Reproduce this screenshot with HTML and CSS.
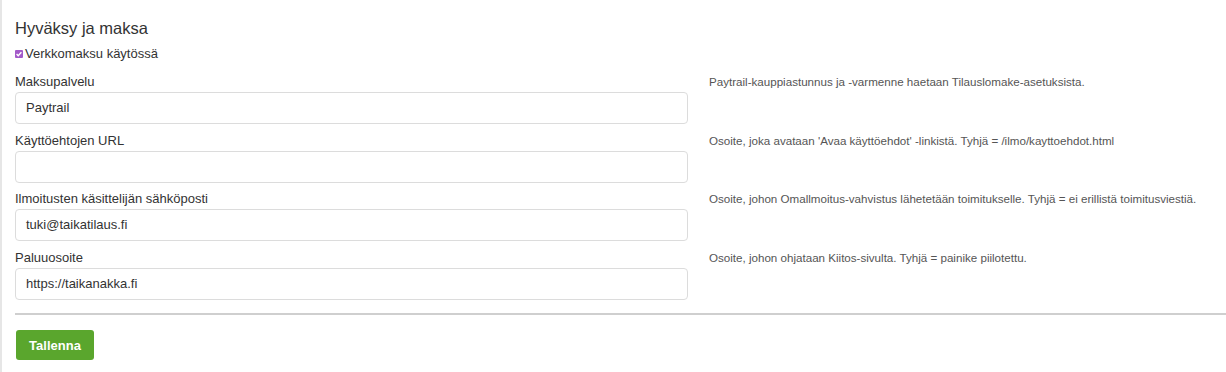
FILE: index.html
```html
<!DOCTYPE html>
<html lang="fi">
<head>
    <meta charset="UTF-8">
    <title>Hyväksy ja maksa</title>
    <link rel="stylesheet" href="styles.css">
</head>
<body>
    <div class="panel">
        <h3 class="panel-title">Hyväksy ja maksa</h3>
        <label class="check-row">
            <span class="check-box">
                <svg width="8" height="8" viewBox="0 0 8 8"><path d="M1.6 4.1 L3.2 5.7 L6.4 2.3" fill="none" stroke="#fff" stroke-width="1.4"/></svg>
            </span>Verkkomaksu käytössä
        </label>
        <div class="form-rows">
            <div class="form-row">
                <div class="field">
                    <div class="field-label">Maksupalvelu</div>
                    <div class="field-input">Paytrail</div>
                </div>
                <div class="field-help">Paytrail-kauppiastunnus ja -varmenne haetaan Tilauslomake-asetuksista.</div>
            </div>
            <div class="form-row">
                <div class="field">
                    <div class="field-label">Käyttöehtojen URL</div>
                    <div class="field-input"></div>
                </div>
                <div class="field-help">Osoite, joka avataan 'Avaa käyttöehdot' -linkistä. Tyhjä = /ilmo/kayttoehdot.html</div>
            </div>
            <div class="form-row">
                <div class="field">
                    <div class="field-label">Ilmoitusten käsittelijän sähköposti</div>
                    <div class="field-input">tuki@taikatilaus.fi</div>
                </div>
                <div class="field-help">Osoite, johon Omallmoitus-vahvistus lähetetään toimitukselle. Tyhjä = ei erillistä toimitusviestiä.</div>
            </div>
            <div class="form-row">
                <div class="field">
                    <div class="field-label">Paluuosoite</div>
                    <div class="field-input">https://taikanakka.fi</div>
                </div>
                <div class="field-help">Osoite, johon ohjataan Kiitos-sivulta. Tyhjä = painike piilotettu.</div>
            </div>
        </div>
        <hr class="divider">
        <button class="save-button">Tallenna</button>
    </div>
</body>
</html>
```

FILE: styles.css
```css
body {
    margin: 0;
    font-family: 'Liberation Sans', Arial, sans-serif;
    color: #333;
    background-color: #fff;
}
.panel {
    border-left: 2px solid #e6e6e6;
    padding: 0 0 12px 13px;
    min-height: 360px;
}
.panel-title {
    margin: 0;
    padding-top: 18px;
    font-size: 16.5px;
    font-weight: normal;
    line-height: 20px;
}
.check-row {
    display: flex;
    align-items: center;
    margin-top: 8px;
    font-size: 13px;
    line-height: 16px;
}
.check-box {
    display: inline-flex;
    width: 8px;
    height: 8px;
    margin-right: 2px;
    border-radius: 1px;
    background-color: #a35ac9;
}
.form-rows {
    margin-top: 10px;
}
.form-row {
    display: grid;
    grid-template-columns: 673px 1fr;
    gap: 21px;
    margin-bottom: 6.7px;
}
.field-label {
    font-size: 13px;
    line-height: 20px;
}
.field-input {
    box-sizing: border-box;
    height: 32px;
    padding: 0 10px;
    border: 1px solid #dcdcdc;
    border-radius: 4px;
    font-size: 13px;
    line-height: 30px;
}
.field-help {
    font-size: 11.6px;
    color: #555;
    line-height: 20px;
}
.divider {
    margin: 12.7px 0 15.5px 0;
    border: 0;
    border-top: 2px solid #cfcfcf;
}
.save-button {
    margin-left: 1px;
    width: 78px;
    height: 30px;
    border: 0;
    border-radius: 3px;
    background-color: #5aa62d;
    color: #fff;
    font-family: 'Liberation Sans', Arial, sans-serif;
    font-size: 13px;
    font-weight: bold;
}
```
